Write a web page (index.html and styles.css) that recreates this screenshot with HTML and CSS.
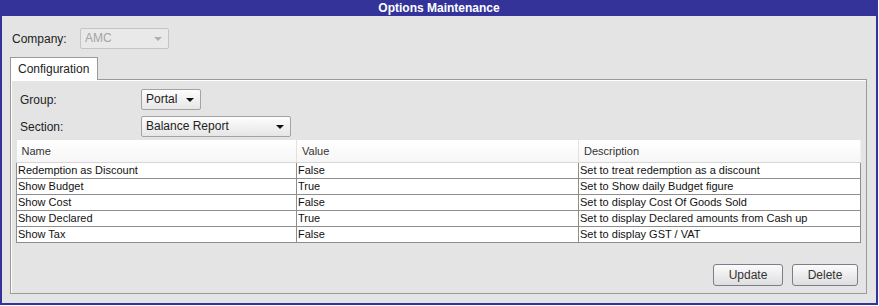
FILE: index.html
```html
<!DOCTYPE html>
<html lang="en">
<head>
    <meta charset="UTF-8">
    <title>Options Maintenance</title>
    <link rel="stylesheet" href="styles.css">
</head>
<body>
    <div class="window">
        <div class="titlebar">Options Maintenance</div>

        <div class="content">
            <div class="field-row company-row">
                <label class="label company-label">Company:</label>
                <div class="combo combo-company disabled">AMC<span class="arrow"></span></div>
            </div>

            <div class="tabs">
                <div class="tab">Configuration</div>
            </div>

            <div class="panel">
                <div class="field-row">
                    <label class="label">Group:</label>
                    <div class="combo combo-group">Portal<span class="arrow"></span></div>
                </div>
                <div class="field-row">
                    <label class="label">Section:</label>
                    <div class="combo combo-section">Balance Report<span class="arrow"></span></div>
                </div>

                <table class="grid">
                    <colgroup>
                        <col class="col-name">
                        <col class="col-value">
                        <col class="col-desc">
                    </colgroup>
                    <thead>
                        <tr><th>Name</th><th>Value</th><th>Description</th></tr>
                    </thead>
                    <tbody>
                        <tr><td>Redemption as Discount</td><td>False</td><td>Set to treat redemption as a discount</td></tr>
                        <tr><td>Show Budget</td><td>True</td><td>Set to Show daily Budget figure</td></tr>
                        <tr><td>Show Cost</td><td>False</td><td>Set to display Cost Of Goods Sold</td></tr>
                        <tr><td>Show Declared</td><td>True</td><td>Set to display Declared amounts from Cash up</td></tr>
                        <tr><td>Show Tax</td><td>False</td><td>Set to display GST / VAT</td></tr>
                    </tbody>
                </table>

                <div class="actions">
                    <button class="btn btn-update">Update</button>
                    <button class="btn btn-delete">Delete</button>
                </div>
            </div>
        </div>
    </div>
</body>
</html>
```

FILE: styles.css
```css
body {
    margin: 0;
    font-family: "Liberation Sans", Arial, sans-serif;
    font-size: 12px;
    color: #222;
    background: #fff;
}

.window {
    width: 878px;
    height: 305px;
    box-sizing: border-box;
    padding: 0 2px 2px;
    background: #333399;
}

.titlebar {
    height: 16px;
    margin: 0 -2px;
    line-height: 16px;
    text-align: center;
    color: #fff;
    font-weight: bold;
    font-size: 12px;
}

.content {
    height: 287px;
    box-sizing: border-box;
    padding: 12px 9px 0 8px;
    background: #e4e4e4;
}

.field-row {
    display: flex;
    align-items: center;
    height: 21px;
}

.label {
    width: 121px;
    flex: none;
}

.company-label {
    width: 68px;
    padding-left: 2px;
}

.combo {
    position: relative;
    height: 21px;
    box-sizing: border-box;
    padding: 0 4px;
    line-height: 19px;
    border: 1px solid #a3a3a3;
    border-radius: 2px;
    background: linear-gradient(#fdfdfd, #e6e6e6);
    color: #222;
}

.combo .arrow {
    position: absolute;
    right: 6px;
    top: 8px;
    width: 0;
    height: 0;
    border-left: 4px solid transparent;
    border-right: 4px solid transparent;
    border-top: 4px solid #111;
}

.combo.disabled {
    border-color: #c4c4c4;
    background: #e9e9e9;
    color: #a4a4a4;
}

.combo.disabled .arrow {
    border-top-color: #b0b0b0;
}

.combo-company {
    width: 89px;
}

.combo-group {
    width: 60px;
}

.combo-section {
    width: 150px;
}

.tabs {
    display: flex;
    margin-top: 8px;
}

.tab {
    position: relative;
    z-index: 1;
    width: 88px;
    height: 23px;
    box-sizing: border-box;
    padding: 4px 0 0 7px;
    margin-bottom: -1px;
    border: 1px solid #999;
    border-bottom: none;
    background: #fff;
}

.panel {
    width: 857px;
    height: 215px;
    box-sizing: border-box;
    padding: 9px 6px 7px 5px;
    display: flex;
    flex-direction: column;
    border: 1px solid #9a9a9a;
    box-shadow: inset 1px 1px 0 #fff;
    background: #e4e4e4;
}

.panel .field-row {
    padding-left: 4px;
}

.panel .field-row + .field-row {
    margin-top: 6px;
}

.grid {
    width: 844px;
    margin-top: 3px;
    border-collapse: collapse;
    table-layout: fixed;
    font-size: 11px;
}

.col-name {
    width: 280px;
}

.col-value {
    width: 282px;
}

.col-desc {
    width: 282px;
}

.grid th {
    height: 22px;
    padding: 0 5px;
    text-align: left;
    font-weight: normal;
    color: #333;
    background: linear-gradient(#fff, #f6f6f6);
    border-right: 1px solid #e2e2e2;
    border-bottom: 1px solid #d6d6d6;
}

.grid th:last-child {
    border-right: 1px solid #f0f0f0;
}

.grid td {
    height: 15px;
    padding: 0 1px;
    line-height: 15px;
    white-space: nowrap;
    overflow: hidden;
    background: #fff;
    border: 1px solid #8e8e8e;
    color: #111;
}

.actions {
    margin-top: auto;
    display: flex;
    justify-content: flex-end;
    gap: 9px;
    padding-right: 2px;
}

.btn {
    height: 22px;
    box-sizing: border-box;
    padding: 0;
    font-family: "Liberation Sans", Arial, sans-serif;
    font-size: 12px;
    color: #333;
    border: 1px solid #7c7c8c;
    border-radius: 3px;
    background: linear-gradient(#fbfbfb, #dedede);
}

.btn-update {
    width: 70px;
}

.btn-delete {
    width: 66px;
}
```
